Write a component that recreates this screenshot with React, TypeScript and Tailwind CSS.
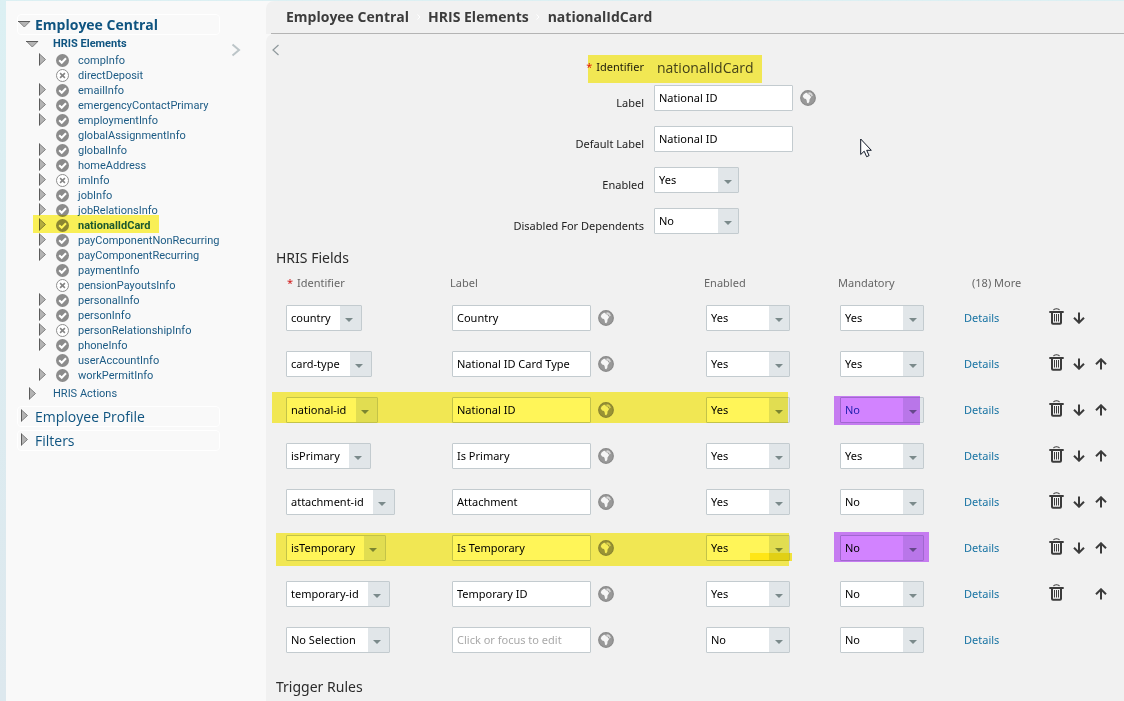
import type { ReactNode } from "react";

interface TreeItem {
  name: string;
  expandable?: boolean;
  disabled?: boolean;
  active?: boolean;
}

interface FieldRow {
  identifier: string;
  width: string;
  label: string;
  enabled: string;
  mandatory: string;
  remove?: boolean;
  down?: boolean;
  up?: boolean;
  marks?: string[];
  mandatoryMark?: string;
  mandatoryClass?: string;
}

const treeItems: TreeItem[] = [
  { name: "compInfo", expandable: true },
  { name: "directDeposit", disabled: true },
  { name: "emailInfo", expandable: true },
  { name: "emergencyContactPrimary", expandable: true },
  { name: "employmentInfo", expandable: true },
  { name: "globalAssignmentInfo" },
  { name: "globalInfo", expandable: true },
  { name: "homeAddress", expandable: true },
  { name: "imInfo", expandable: true, disabled: true },
  { name: "jobInfo", expandable: true },
  { name: "jobRelationsInfo", expandable: true },
  { name: "nationalIdCard", expandable: true, active: true },
  { name: "payComponentNonRecurring", expandable: true },
  { name: "payComponentRecurring", expandable: true },
  { name: "paymentInfo" },
  { name: "pensionPayoutsInfo", disabled: true },
  { name: "personalInfo", expandable: true },
  { name: "personInfo", expandable: true },
  { name: "personRelationshipInfo", expandable: true, disabled: true },
  { name: "phoneInfo", expandable: true },
  { name: "userAccountInfo" },
  { name: "workPermitInfo", expandable: true },
];

const fieldRows: FieldRow[] = [
  { identifier: "country", width: "w-[76px]", label: "Country", enabled: "Yes", mandatory: "Yes", remove: true, down: true },
  { identifier: "card-type", width: "w-[86px]", label: "National ID Card Type", enabled: "Yes", mandatory: "Yes", remove: true, down: true, up: true },
  {
    identifier: "national-id",
    width: "w-[92px]",
    label: "National ID",
    enabled: "Yes",
    mandatory: "No",
    remove: true,
    down: true,
    up: true,
    marks: ["-left-1 top-[5px] h-[31px] w-[516px] bg-[#fff558]"],
    mandatoryMark: "-left-1 top-[9px] h-[29px] w-[86px]",
    mandatoryClass: "text-[#2a3fb0]",
  },
  { identifier: "isPrimary", width: "w-[85px]", label: "Is Primary", enabled: "Yes", mandatory: "Yes", remove: true, down: true, up: true },
  { identifier: "attachment-id", width: "w-[109px]", label: "Attachment", enabled: "Yes", mandatory: "No", remove: true, down: true, up: true },
  {
    identifier: "isTemporary",
    width: "w-[100px]",
    label: "Is Temporary",
    enabled: "Yes",
    mandatory: "No",
    remove: true,
    down: true,
    up: true,
    marks: [
      "left-0 top-2 h-[33px] w-[513px] bg-[#fff558]",
      "left-[474px] top-[28px] h-2 w-[42px] bg-[#fff040]",
    ],
    mandatoryMark: "-left-1 top-[7px] h-[30px] w-[95px]",
  },
  { identifier: "temporary-id", width: "w-[104px]", label: "Temporary ID", enabled: "Yes", mandatory: "No", remove: true, up: true },
  { identifier: "No Selection", width: "w-[104px]", label: "", enabled: "No", mandatory: "No" },
];

const TriangleRight = () => (
  <svg width="8" height="13" viewBox="0 0 8 13" aria-hidden="true">
    <path d="M1.500 1v11L7.500 6.500z" fill="#b4b4b4" stroke="#808080" strokeWidth="1" />
    <path d="M1.500.5v12" stroke="#5c5c5c" />
  </svg>
);

const TriangleDown = () => (
  <svg width="13" height="8" viewBox="0 0 13 8" aria-hidden="true">
    <path d="M.8 1.500h11L6.300 7z" fill="#b4b4b4" stroke="#808080" strokeWidth="1" />
    <path d="M0 1.500h12" stroke="#5c5c5c" />
  </svg>
);

const StatusIcon = ({ disabled }: { disabled?: boolean }) => (
  <svg width="13" height="14" viewBox="0 0 13 14" fill="none" aria-hidden="true">
    {disabled ? (
      <>
        <circle cx="6.500" cy="6.500" r="6" fill="#fff" stroke="#8e8e8e" />
        <path d="M4.100 4.100l4.800 4.800M8.900 4.100L4.100 8.900" stroke="#858585" strokeWidth="1.600" />
      </>
    ) : (
      <>
        <circle cx="6.500" cy="6.500" r="6.500" fill="#8c8c8c" />
        <path d="M3.200 6.300l2.500 2.500 4.300-4.600" stroke="#fff" strokeWidth="2" />
      </>
    )}
  </svg>
);

const GlobeIcon = () => (
  <svg width="16" height="16" viewBox="0 0 16 16" aria-hidden="true">
    <circle cx="8" cy="8" r="7.300" fill="#999" stroke="#8a8a8a" strokeWidth="1.200" />
    <path
      d="M2.800 6.400L3.600 4.600l2-1.600 1.500-.2.800 1.400 1.600.4.700 1.600 1.300.4-1.300 2-.7 1-.1 1.900L8.300 13.200l-1.300-.5-.3-2.300-.7-1.500-1.900-.5z"
      fill="#f6f6f6"
    />
    <path d="M8.200 2.800l1.800-.5 1.900 1.300 1 2.200-1.200.4-1.500-1.700-1.700-.4z" fill="#d8d8d8" />
  </svg>
);

const TrashIcon = () => (
  <svg width="16" height="17" viewBox="0 0 16 17" fill="none" stroke="#3b3b3b" aria-hidden="true">
    <path d="M4.500 2.200c.3-1 1-1.500 3-1.500s2.700.5 3 1.500" strokeWidth="1.100" />
    <path d="M.3 4h14.400" strokeWidth="2" />
    <path d="M3 4v10.800q0 1 1 1h7q1 0 1-1V4" strokeWidth="2" />
    <path d="M5.500 6v7.500M7.500 6v7.500M9.500 6v7.500" strokeWidth="1" />
  </svg>
);

const ArrowIcon = ({ up }: { up?: boolean }) => (
  <svg width="12" height="12" viewBox="0 0 12 12" fill="none" stroke="#3b3b3b" strokeWidth="2" aria-hidden="true">
    {up ? <path d="M6 11.500V1.800M1 6.300l5-5 5 5" /> : <path d="M6 .5v9.700M1 5.700l5 5 5-5" />}
  </svg>
);

interface SelectBoxProps {
  label: string;
  value: string;
  id?: string;
  width?: string;
  arrowClass?: string;
  className?: string;
}

const SelectBox = ({ label, value, id, width = "w-[84px]", arrowClass = "w-5", className = "text-black" }: SelectBoxProps) => (
  <div className={`relative h-[26px] ${width}`}>
    <select
      id={id}
      aria-label={label}
      defaultValue={value}
      className={`h-full w-full appearance-none rounded-[1px] border border-[#c3cbcf] bg-white pl-1 ${className}`}
    >
      <option>{value}</option>
      {value === "Yes" && <option>No</option>}
      {value === "No" && <option>Yes</option>}
    </select>
    <span
      className={`pointer-events-none absolute inset-y-px right-px flex items-center justify-center bg-[#e1e6e9] pt-1 ${arrowClass}`}
    >
      <svg width="8" height="4" viewBox="0 0 8 4" aria-hidden="true">
        <path d="M0 0h8L4 4z" fill="#7b8a8b" />
      </svg>
    </span>
  </div>
);

const TextBox = ({ label, value, id }: { label: string; value: string; id?: string }) => (
  <input
    id={id}
    type="text"
    aria-label={label}
    defaultValue={value}
    placeholder="Click or focus to edit"
    className="h-[26px] w-[139px] rounded-[1px] border border-[#c3cbcf] bg-white px-1 pb-0.5 text-black placeholder:text-[#a9a9a9]"
  />
);

const GlobeButton = () => (
  <button type="button" aria-label="Translations" className="ml-[7px]">
    <GlobeIcon />
  </button>
);

const Highlight = ({ className }: { className: string }) => (
  <span className={`pointer-events-none absolute z-10 mix-blend-multiply ${className}`} />
);

const Section = ({ title, open }: { title: string; open?: boolean }) => (
  <button
    type="button"
    className={`flex h-[21px] w-full items-center rounded border border-white text-left font-['Open_Sans','Noto_Sans',sans-serif] text-sm text-[#0f5480] ${open ? "font-bold" : ""}`}
  >
    <span className={`flex w-[17px] pb-0.5 ${open ? "" : "pl-[2px]"}`}>{open ? <TriangleDown /> : <TriangleRight />}</span>
    {title}
  </button>
);

const Sidebar = () => (
  <aside className="flex w-[260px] shrink-0 bg-[#f9f9f9] pt-[13px] pl-[11px] font-['Roboto','Noto_Sans',sans-serif]">
    <nav className="w-[203px]">
      <Section title="Employee Central" open />
      <a href="#elements" className="mt-px flex h-4 items-center pl-[9px] font-bold text-[#0f5480]">
        <span className="w-[27px]">
          <TriangleDown />
        </span>
        HRIS Elements
      </a>
      <ul className="mt-px">
        {treeItems.map((item) => (
          <li key={item.name} className="relative flex h-[15px] items-center pl-[21px]">
            {item.active && <Highlight className="-top-[3px] left-4 h-[18px] w-[126px] bg-[#fff558]" />}
            <span className="w-[18px] shrink-0 pb-0.5">{item.expandable && <TriangleRight />}</span>
            <span className="w-[22px] shrink-0">
              <StatusIcon disabled={item.disabled} />
            </span>
            <a href={`#${item.name}`} className={`whitespace-nowrap text-[#1c5b85] ${item.active ? "font-bold" : ""}`}>
              {item.name}
            </a>
          </li>
        ))}
      </ul>
      <a href="#actions" className="mt-[3px] mb-[5px] flex h-[15px] items-center pl-[11px] text-[#1c5b85]">
        <span className="w-[25px]">
          <TriangleRight />
        </span>
        HRIS Actions
      </a>
      <div className="space-y-[3px]">
        <Section title="Employee Profile" />
        <Section title="Filters" />
      </div>
    </nav>
    <button type="button" aria-label="Expand panel" className="mt-[28px] ml-[11px] h-4 self-start">
      <svg width="10" height="14" viewBox="0 0 10 14" fill="none" aria-hidden="true">
        <path d="M1.500 1.500L8 7l-6.500 5.500" stroke="#bcc5c8" strokeWidth="2" />
      </svg>
    </button>
  </aside>
);

const FormRow = ({ label, htmlFor, children }: { label: string; htmlFor: string; children: ReactNode }) => (
  <div className="grid grid-cols-[378px_1fr] gap-x-[10px]">
    <label htmlFor={htmlFor} className="pt-[10px] text-right text-[#222]">
      {label}
    </label>
    <div className="flex items-center">{children}</div>
  </div>
);

const Crumb = () => (
  <svg width="4" height="6" viewBox="0 0 4 6" fill="none" aria-hidden="true">
    <path d="M.5.500L3 3 .5 5.500" stroke="#fff" />
  </svg>
);

const ElementForm = () => (
  <form className="space-y-[15px]">
    <div className="mb-[2px] grid grid-cols-[378px_1fr] gap-x-[10px]">
      <div className="flex h-7 items-center justify-end pb-1 text-[#222]">
        <span className="mr-1 text-[#e02020]">*</span>Identifier
      </div>
      <div className="relative flex h-7 items-center pb-0.5 pl-[3px] font-['Open_Sans','Noto_Sans',sans-serif] text-sm text-[#444]">
        <Highlight className="-left-[66px] top-0 h-7 w-[174px] bg-[#fff558]" />
        nationalIdCard
      </div>
    </div>
    <FormRow label="Label" htmlFor="label">
      <TextBox id="label" label="Label" value="National ID" />
      <GlobeButton />
    </FormRow>
    <FormRow label="Default Label" htmlFor="default-label">
      <TextBox id="default-label" label="Default Label" value="National ID" />
    </FormRow>
    <FormRow label="Enabled" htmlFor="enabled">
      <SelectBox id="enabled" label="Enabled" value="Yes" width="w-[85px]" />
    </FormRow>
    <FormRow label="Disabled For Dependents" htmlFor="dependents">
      <SelectBox id="dependents" label="Disabled For Dependents" value="No" width="w-[85px]" />
    </FormRow>
  </form>
);

const FieldsTable = () => (
  <table className="w-full table-fixed text-left">
    <colgroup>
      <col className="w-[174px]" />
      <col className="w-[254px]" />
      <col className="w-[134px]" />
      <col className="w-[126px]" />
      <col className="w-[82px]" />
      <col />
    </colgroup>
    <thead>
      <tr className="h-[25px] text-[#666]">
        <th className="pl-[11px] font-normal">
          <span className="mr-1 text-[#d01515]">*</span>Identifier
        </th>
        <th className="font-normal">Label</th>
        <th className="font-normal">Enabled</th>
        <th className="font-normal">Mandatory</th>
        <th className="pl-2 font-normal whitespace-nowrap">(18) More</th>
        <td />
      </tr>
    </thead>
    <tbody>
      {fieldRows.map((row) => (
        <tr key={row.identifier} className="h-[46px]">
          <td className="relative pl-[10px]">
            {row.marks?.map((mark) => (
              <Highlight key={mark} className={mark} />
            ))}
            <SelectBox label="Identifier" value={row.identifier} width={row.width} arrowClass="w-[21px] pr-[3px]" />
          </td>
          <td className="pl-[2px]">
            <div className="flex items-center">
              <TextBox label="Label" value={row.label} />
              <GlobeButton />
            </div>
          </td>
          <td className="pl-[2px]">
            <SelectBox label="Enabled" value={row.enabled} />
          </td>
          <td className="relative pl-[2px]">
            {row.mandatoryMark && <Highlight className={`bg-[#d283ff] ${row.mandatoryMark}`} />}
            <SelectBox label="Mandatory" value={row.mandatory} className={row.mandatoryClass} />
          </td>
          <td>
            <a href="#details" className="text-[#1873a3]">
              Details
            </a>
          </td>
          <td>
            <div className="grid grid-cols-[22px_22px_22px] items-center justify-items-center">
              <span>
                {row.remove && (
                  <button type="button" aria-label="Delete" className="block pb-1">
                    <TrashIcon />
                  </button>
                )}
              </span>
              <span>
                {row.down && (
                  <button type="button" aria-label="Move down" className="block">
                    <ArrowIcon />
                  </button>
                )}
              </span>
              <span>
                {row.up && (
                  <button type="button" aria-label="Move up" className="block">
                    <ArrowIcon up />
                  </button>
                )}
              </span>
            </div>
          </td>
        </tr>
      ))}
    </tbody>
  </table>
);

export default function App() {
  return (
    <div className="relative flex min-h-screen bg-linear-to-b from-[#dcf0f3] to-[#dde8ee] pt-px pl-[6px] font-['Noto_Sans','Open_Sans',sans-serif] text-[11px] leading-4 [&_svg]:block">
      <Sidebar />
      <div className="flex min-w-0 flex-1 flex-col bg-[#f9f9f9]">
        <header className="rounded-tl-lg bg-[#f1f1f1] pl-[5px]">
          <div className="flex h-[33px] items-center border-b border-[#b4b4b4] pl-[15px] font-['Open_Sans','Noto_Sans',sans-serif] text-sm font-bold text-[#3c3c3c]">
            <span>Employee Central</span>
            <span className="flex w-[19px] justify-center">
              <Crumb />
            </span>
            <span>HRIS Elements</span>
            <span className="flex w-[19px] justify-center">
              <Crumb />
            </span>
            <span>nationalIdCard</span>
          </div>
        </header>
        <main className="relative flex-1 rounded-tl-lg bg-[#f1f1f1] pt-[21px]">
          <button type="button" aria-label="Collapse panel" className="absolute top-[10px] left-[5px]">
            <svg width="9" height="12" viewBox="0 0 9 12" fill="none" aria-hidden="true">
              <path d="M7.500 1L2 6l5.500 5" stroke="#8f999c" strokeWidth="1.200" />
            </svg>
          </button>
          <ElementForm />
          <section className="mt-3 pl-[10px]">
            <h2 className="flex h-6 items-center text-sm text-[#2b2b2b]">HRIS Fields</h2>
            <FieldsTable />
          </section>
          <section className="mt-3 pl-[10px]">
            <h2 className="flex h-6 items-center text-sm text-[#2b2b2b]">Trigger Rules</h2>
          </section>
        </main>
      </div>
      <svg className="pointer-events-none absolute top-[138px] left-[860px]" width="12" height="20" viewBox="0 0 12 20" aria-hidden="true">
        <path d="M.7 1v15.500l3.500-3.300 2.400 5.500 2.500-1.100-2.400-5.300h4.600z" fill="#fff" stroke="#111827" />
      </svg>
    </div>
  );
}
